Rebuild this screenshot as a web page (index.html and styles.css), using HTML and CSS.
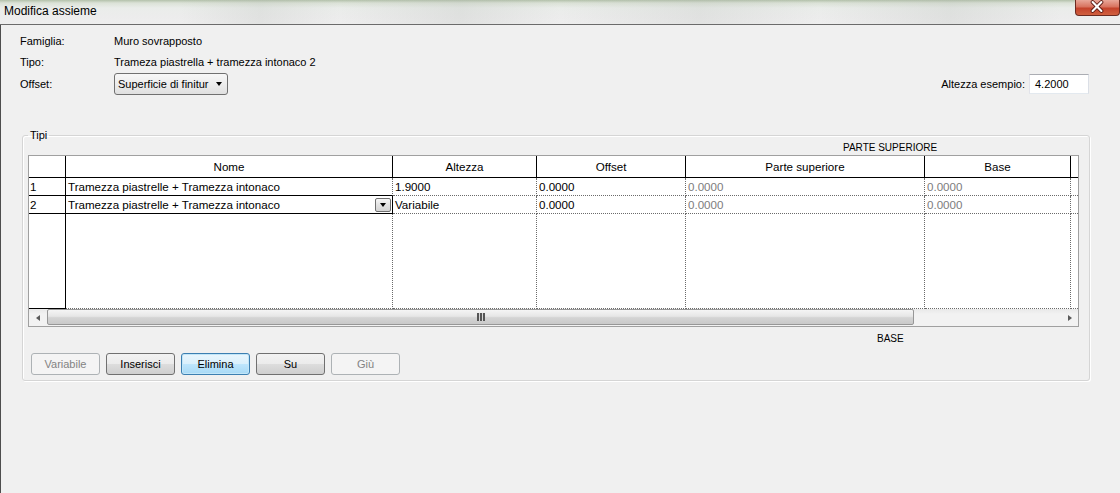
FILE: index.html
```html
<!DOCTYPE html>
<html lang="it">
<head>
<meta charset="utf-8">
<title>Modifica assieme</title>
<link rel="stylesheet" href="styles.css">
</head>
<body>
<div class="window">
  <header class="titlebar">
    <span class="title">Modifica assieme</span>
    <div class="close">
      <svg width="45" height="16" viewBox="0 0 45 16">
        <path d="M18 3 L27 12 M27 3 L18 12" stroke="#5a1a12" stroke-width="4" stroke-linecap="round"/>
        <path d="M18 3 L27 12 M27 3 L18 12" stroke="#ffffff" stroke-width="2.2" stroke-linecap="round"/>
      </svg>
    </div>
  </header>
  <main class="content">
    <div class="form">
      <div class="row"><span class="lbl">Famiglia:</span><span>Muro sovrapposto</span></div>
      <div class="row"><span class="lbl">Tipo:</span><span>Trameza piastrella + tramezza intonaco 2</span></div>
      <div class="row row-offset">
        <div class="row-left">
          <span class="lbl">Offset:</span>
          <div class="combo"><span>Superficie di finitur</span><span class="arrow"></span></div>
        </div>
        <div class="sample"><span>Altezza esempio:</span><div class="input">4.2000</div></div>
      </div>
    </div>

    <fieldset class="group">
      <legend>Tipi</legend>
      <div class="cap cap-top">PARTE SUPERIORE</div>
      <div class="grid-frame">
        <table class="grid">
          <colgroup>
            <col class="c-num"><col class="c-nome"><col class="c-alt"><col class="c-off"><col class="c-sup"><col class="c-base"><col class="c-fill">
          </colgroup>
          <tr class="h">
            <th class="num"></th><th>Nome</th><th>Altezza</th><th>Offset</th><th>Parte superiore</th><th>Base</th><th class="fill"></th>
          </tr>
          <tr class="r">
            <td class="num">1</td><td class="nome1">Tramezza piastrelle + Tramezza intonaco</td><td>1.9000</td><td>0.0000</td><td class="dis">0.0000</td><td class="dis">0.0000</td><td class="fill"></td>
          </tr>
          <tr class="r">
            <td class="num">2</td>
            <td class="edit"><div class="edit-box"><span>Tramezza piastrelle + Tramezza intonaco</span><span class="dropbtn"><span class="arrow"></span></span></div></td>
            <td>Variabile</td><td>0.0000</td><td class="dis">0.0000</td><td class="dis">0.0000</td><td class="fill"></td>
          </tr>
          <tr class="e">
            <td class="num"></td><td></td><td></td><td></td><td></td><td></td><td class="fill"></td>
          </tr>
        </table>
        <div class="hscroll">
          <div class="sb-btn"><span class="tri-left"></span></div>
          <div class="sb-track"><div class="thumb"><span class="grip"></span></div></div>
          <div class="sb-btn"><span class="tri-right"></span></div>
        </div>
      </div>
      <div class="cap cap-bottom">BASE</div>
      <div class="buttons">
        <div class="btn disabled">Variabile</div>
        <div class="btn">Inserisci</div>
        <div class="btn focused">Elimina</div>
        <div class="btn">Su</div>
        <div class="btn disabled">Giù</div>
      </div>
    </fieldset>
  </main>
</div>
</body>
</html>
```
FILE: styles.css
```css
html, body {
  margin: 0;
  padding: 0;
}
body {
  background: #f0f0f0;
  font-family: "Liberation Sans", Arial, sans-serif;
  font-size: 11px;
  color: #000;
}
.window {
  width: 1120px;
  height: 493px;
  display: flex;
  flex-direction: column;
  overflow: hidden;
}
.titlebar {
  height: 24px;
  flex: none;
  border-bottom: 1px solid #6b6b6b;
  display: flex;
  justify-content: space-between;
  align-items: flex-start;
  background:
    linear-gradient(90deg, rgba(255,255,255,0) 0, rgba(255,255,255,0) 180px, rgba(170,175,170,0.18) 260px, rgba(255,255,255,0) 340px, rgba(170,175,170,0.2) 460px, rgba(255,255,255,0) 560px, rgba(170,175,170,0.18) 700px, rgba(255,255,255,0) 820px, rgba(170,175,170,0.2) 950px, rgba(255,255,255,0) 1060px),
    linear-gradient(#b3c1aa 0, #dbe2d7 3px, #eaedea 8px, #ececec 16px, #eeeeee 24px);
}
.title {
  font-size: 12px;
  line-height: 22px;
  padding-left: 4px;
}
.close {
  width: 45px;
  height: 16px;
  box-sizing: border-box;
  border: 1px solid #6b2a20;
  border-top: none;
  border-radius: 0 0 4px 4px;
  background: linear-gradient(#e9a799 0, #d8735f 45%, #c4432c 55%, #d0603f 100%);
  display: flex;
}
.close svg {
  display: block;
  margin: -1px 0 0 -1px;
}
.content {
  flex: 1;
  border-left: 1px solid #4d4d4d;
}
.form {
  padding: 5px 31px 0 19px;
}
.row {
  display: flex;
  align-items: center;
  height: 21px;
}
.lbl {
  width: 94px;
  flex: none;
}
.row-offset {
  height: 24px;
  justify-content: space-between;
}
.row-left {
  display: flex;
  align-items: center;
}
.combo {
  width: 114px;
  height: 22px;
  box-sizing: border-box;
  border: 1px solid #707070;
  border-radius: 3px;
  background: linear-gradient(#f7f7f7, #ececec 50%, #e0e0e0);
  display: flex;
  align-items: center;
  justify-content: space-between;
  padding: 0 5px 0 3px;
}
.arrow {
  width: 0;
  height: 0;
  border-left: 3.5px solid transparent;
  border-right: 3.5px solid transparent;
  border-top: 4px solid #000;
}
.sample {
  display: flex;
  align-items: center;
  gap: 4px;
}
.input {
  width: 60px;
  height: 20px;
  box-sizing: border-box;
  border: 1px solid #abadb3;
  border-color: #abadb3 #dbdfe6 #e3e9ef #e2e3ea;
  background: #fff;
  padding-left: 5px;
  line-height: 18px;
}

.group {
  margin: 33px 0 0 21px;
  width: 1068px;
  min-width: 0;
  box-sizing: border-box;
  padding: 0 10px 5px 5px;
  border: 1px solid #d5d5d5;
  border-radius: 3px;
  box-shadow: inset 1px 1px #fff, 1px 1px #fff;
}
.group legend {
  padding: 0 2px;
  font-size: 11px;
  line-height: 13px;
}
.cap {
  font-size: 10px;
  line-height: 11px;
}
.cap-top {
  padding-left: 815px;
  margin-bottom: 2px;
}
.cap-bottom {
  padding-left: 849px;
  margin-top: 6px;
}
.grid-frame {
  width: 1051px;
  box-sizing: border-box;
  border: 1px solid #a0a0a0;
  background: #fff;
}
.grid {
  border-collapse: separate;
  border-spacing: 0;
  table-layout: fixed;
  width: 1049px;
  font-size: 11.6px;
}
.c-num { width: 37px; }
.c-nome { width: 327px; }
.c-alt { width: 144px; }
.c-off { width: 149px; }
.c-sup { width: 239px; }
.c-base { width: 146px; }
.c-fill { width: 7px; }
.grid tr.h { height: 22px; }
.grid tr.r { height: 18px; }
.grid tr.e { height: 95px; }
.grid th, .grid td {
  padding: 0 2px;
  overflow: hidden;
  white-space: nowrap;
  vertical-align: middle;
  text-align: left;
}
.grid th {
  font-weight: normal;
  text-align: center;
  border-right: 1px solid #000;
  border-bottom: 1px solid #000;
}
.grid td {
  border-right: 1px dotted #6a6a6a;
  border-bottom: 1px dotted #6a6a6a;
}
.grid td.num {
  border-right: 1px solid #000;
  border-bottom: 1px solid #000;
  padding-left: 1px;
}
.grid th.fill, .grid td.fill {
  border-right: none;
}
.grid td.dis {
  color: #7d7d7d;
}
.grid td.nome1 {
  border-bottom: 1px solid #000;
}
.grid td.edit {
  border-right: 1px solid #000;
  border-bottom: 1px solid #000;
  padding: 0 1px 0 2px;
}
.edit-box {
  display: flex;
  align-items: center;
  justify-content: space-between;
}
.dropbtn {
  width: 16px;
  height: 14px;
  box-sizing: border-box;
  border: 1px solid #6f6f6f;
  border-radius: 2px;
  background: linear-gradient(#f6f6f6, #e2e2e2 50%, #d3d3d3);
  display: flex;
  align-items: center;
  justify-content: center;
}
.hscroll {
  display: flex;
  height: 17px;
  background: linear-gradient(#e8e8e8, #f2f2f2 30%, #f2f2f2);
}
.sb-btn {
  width: 17px;
  flex: none;
  display: flex;
  align-items: center;
  justify-content: center;
}
.tri-left {
  width: 0;
  height: 0;
  border-top: 3.5px solid transparent;
  border-bottom: 3.5px solid transparent;
  border-right: 4px solid #5a5a5a;
}
.tri-right {
  width: 0;
  height: 0;
  border-top: 3.5px solid transparent;
  border-bottom: 3.5px solid transparent;
  border-left: 4px solid #5a5a5a;
}
.sb-track {
  flex: 1;
  display: flex;
  padding: 0 0 0 1px;
}
.thumb {
  width: 867px;
  height: 16px;
  box-sizing: border-box;
  border: 1px solid #979797;
  border-radius: 2px;
  background: linear-gradient(#f5f5f5, #e6e6e6 45%, #d4d4d4 55%, #c9c9c9);
  display: flex;
  align-items: center;
  justify-content: center;
}
.grip {
  width: 8px;
  height: 8px;
  background: repeating-linear-gradient(90deg, #555 0 2px, #d8d8d8 2px 3px);
}
.buttons {
  display: flex;
  gap: 6px;
  margin: 9px 0 0 3px;
}
.btn {
  width: 69px;
  height: 22px;
  box-sizing: border-box;
  border: 1px solid #707070;
  border-radius: 3px;
  background: linear-gradient(#f2f2f2, #ebebeb 50%, #dddddd 50%, #cfcfcf);
  display: flex;
  align-items: center;
  justify-content: center;
}
.btn.focused {
  border-color: #3c7fb1;
  background: linear-gradient(#eaf6fd, #d9f0fc 50%, #bee6fd 50%, #a7d9f5);
  box-shadow: inset 0 0 0 1px #c2e6f8;
}
.btn.disabled {
  border-color: #adb2b5;
  background: #f4f4f4;
  color: #838383;
}
```
